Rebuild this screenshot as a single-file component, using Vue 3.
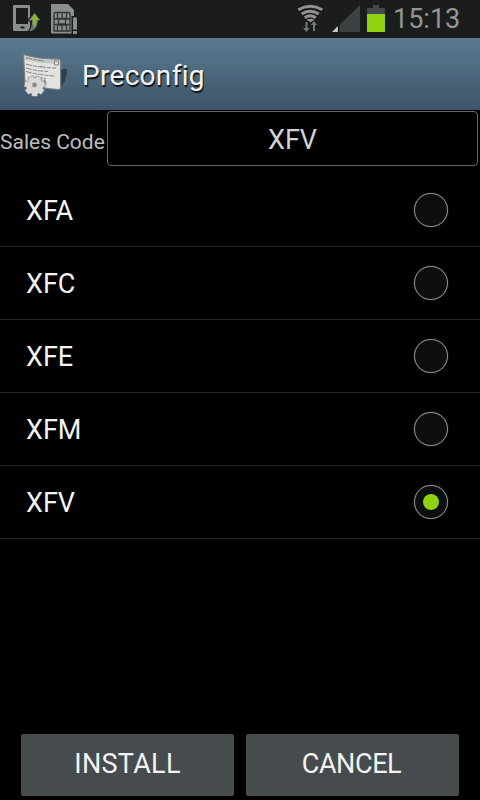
<template>
  <div class="screen">
    <div class="status-bar">
      <svg class="status-left" width="90" height="38" viewBox="0 0 90 38">
        <!-- Phone with update arrow -->
        <path d="M14 5h15q1 0 1 1v24q0 1-1 1H14q-1 0-1-1V6q0-1 1-1z" fill="#8a8e8e" />
        <path d="M16 8h12v16H16z" fill="#1b1c1c" />
        <path d="M20.500 26.500h4v2h-4z" fill="#1b1c1c" />
        <path d="M34.600 12l7 9h-3.200q0 6-4 9-2.500 2-6.500 2 3.500-4 3.500-11h-4z" fill="#6b7473" stroke="#1b1c1c" stroke-width="1.200" />
        <path d="M34.600 14l4.600 6h-2.400q0 4-2.300 7.500-1.500-2-1.500-7.500h-2.800z" fill="#8bb82a" />
        <!-- Sim card -->
        <path d="M51 4h17l6 6v23.500H51z" fill="#8a8e8e" />
        <path d="M71.500 16h6v18.500h-6z" fill="#1b1c1c" />
        <path d="M73 17.500h4v12h-4zM73 31h4v3h-4z" fill="#8a8e8e" />
        <g fill="none" stroke="#303536" stroke-width="1.300">
          <path d="M54 31V14q0-1.500 1.500-1.500h13q1.500 0 1.500 1.500v17z" />
          <path d="M57.500 13v5.500h9V13M57.500 31v-6h9v6M62 13v5M62 25v5.500M58.500 19h7v5h-7z" />
          <path d="M54 19h4M54 24.500h4M66 19h4M66 24.500h4" />
        </g>
      </svg>
      <svg class="status-right" width="96" height="38" viewBox="292 0 96 38">
        <!-- Wifi -->
        <g fill="none" stroke="#8f9393" stroke-width="3">
          <path d="M298.300 9.700q12-7 24 0" />
          <path d="M301.700 14q8.500-5.500 17 0" />
          <path d="M304.700 17.800q5.500-4 11 0" />
        </g>
        <path d="M306.500 19.800q4-2 8 0l-4 2.500z" fill="#8f9393" />
        <path d="M305.500 22h2v6h2l-3 4-3.500-4h2.500zM313 31v-6h-2.200l3.200-4 3 4h-2v6z" fill="#6f7777" />
        <!-- Signal -->
        <path d="M360 5v27h-28z" fill="#3c4142" />
        <path d="M338 26v6h-6z" fill="#c4c7c7" />
        <path d="M338 25h1.300v7H338z" fill="#000" />
        <!-- Battery -->
        <path d="M373 5h6v3h6v6h-18V8h6z" fill="#434849" />
        <path d="M367 14h18v18h-18z" fill="#8fd20f" />
      </svg>
      <span class="clock">15:13</span>
    </div>

    <header class="action-bar">
      <svg class="app-icon" width="48" height="48" viewBox="20 51 48 48">
        <!-- Sheet of paper -->
        <path d="M61 71l4-1.500q3 .5 2 4.500l-2.500 9-4.500 6z" fill="#2b3843" opacity=".85" />
        <path d="M23.500 55.500q16 5 34.500 4.500 2.600 0 2.600 2.500v26q0 2-2 2-18-1-33.600-6.500z" fill="#e2e2e0" stroke="#777c7f" stroke-width="1.200" />
        <path d="M24.500 57q15 4.500 35 4v4q-19-.5-35-4.500z" fill="#c4c6c5" />
        <path d="M54.500 62h4v4h-4z" fill="#dcdcdc" stroke="#858585" stroke-width="1" />
        <g fill="none" stroke="#858686" stroke-width="1" stroke-dasharray="6 1 4 1">
          <path d="M26 58.500q9 2.500 18 3.500M26 65q8 2.500 16 3M40 67.500q8 1.500 16 1.500M26 69q10 3 22 3.500M26 72.500q13 3.500 28 4.500M37 78.500l9 1" />
        </g>
        <path d="M43 80q4 1 3.500 5l-3 4z" fill="#6f7578" opacity=".7" />
        <!-- Gear -->
        <g stroke="#858c90" stroke-width="6.400">
          <path v-for="angle in teeth" :key="angle" d="M34.700 87V76.500" :transform="`rotate(${angle} 34.700 87)`" />
        </g>
        <circle cx="34.700" cy="87" r="9" fill="#858c90" />
        <g stroke="#d9d9d9" stroke-width="5">
          <path v-for="angle in teeth" :key="angle" d="M34.700 87V77" :transform="`rotate(${angle} 34.700 87)`" />
        </g>
        <circle cx="34.700" cy="87" r="8.300" fill="#d9d9d9" />
        <circle cx="34.500" cy="86" r="2.400" fill="#858b8e" />
      </svg>
      <h1 class="title">Preconfig</h1>
    </header>

    <div class="sales-code">
      <label class="label" for="code">Sales Code</label>
      <div id="code" class="field">{{ selected }}</div>
    </div>

    <ul class="codes">
      <li v-for="code in codes" :key="code" class="code" @click="selected = code">
        <span class="name">{{ code }}</span>
        <span class="radio" :class="{ checked: code === selected }"></span>
      </li>
    </ul>

    <div class="actions">
      <button class="install">INSTALL</button>
      <button class="cancel">CANCEL</button>
    </div>
  </div>
</template>

<script setup>
import { ref } from 'vue'

const codes = ['XFA', 'XFC', 'XFE', 'XFM', 'XFV']
const selected = ref('XFV')

// Rotation of each gear tooth in the app icon
const teeth = [-25, 26, 77, 128, 180, 231, 283]
</script>

<style>
body {
  margin: 0;
  background: #000;
}
</style>

<style scoped>
.screen {
  display: flex;
  flex-direction: column;
  width: 480px;
  height: 800px;
  overflow: hidden;
  background: #000;
  color: #f3f3f3;
  font-family: Roboto, sans-serif;
}
.status-bar {
  display: flex;
  height: 38px;
  flex: none;
  background: #1b1c1c;
}
.status-right {
  margin-left: 202px;
}
.clock {
  margin-left: 5px;
  font-size: 27px;
  line-height: 39px;
  color: #929696;
}
.action-bar {
  display: flex;
  align-items: center;
  box-sizing: border-box;
  height: 72px;
  flex: none;
  padding-left: 20px;
  background: linear-gradient(#5b7b90, #3d5369);
}
.title {
  margin: 0 0 0 14px;
  padding-top: 3px;
  font-size: 28px;
  font-weight: 400;
  line-height: 69px;
  letter-spacing: 0.3px;
  font-variant-ligatures: none;
  text-shadow: 1px 2px 1px #111;
}
.sales-code {
  display: flex;
  align-items: center;
  height: 64px;
  flex: none;
}
.label {
  width: 107px;
  font-size: 21px;
  white-space: nowrap;
  color: #bdbdbd;
}
.field {
  box-sizing: border-box;
  width: 371px;
  height: 55px;
  margin-bottom: 7px;
  border: 1px solid #5f6867;
  border-radius: 4px;
  font-size: 27px;
  line-height: 57px;
  text-align: center;
  color: #d2d2d2;
}
.codes {
  margin: 0;
  padding: 0;
  list-style: none;
}
.code {
  display: flex;
  align-items: center;
  justify-content: space-between;
  box-sizing: border-box;
  height: 73px;
  padding: 0 32px 0 26px;
  border-bottom: 1px solid #292929;
  font-size: 27px;
  cursor: pointer;
}
.name {
  padding-top: 2px;
}
.radio {
  display: flex;
  align-items: center;
  justify-content: center;
  box-sizing: border-box;
  width: 34px;
  height: 34px;
  border: 1px solid #858c8c;
  border-radius: 50%;
  background: #0c0e10;
  box-shadow: 0 0 1px #858c8c;
}
.checked::after {
  content: '';
  width: 16px;
  height: 16px;
  border-radius: 50%;
  background: #8fd20f;
}
.actions {
  display: flex;
  gap: 12px;
  margin-top: auto;
  padding: 0 21px 4px;
}
button {
  width: 213px;
  height: 62px;
  padding: 0 0 2px;
  border: none;
  border-radius: 2px;
  background: #464b4e;
  color: #f3f3f3;
  font-family: inherit;
  font-size: 27px;
}
.install {
  letter-spacing: 0.3px;
}
.cancel {
  padding-right: 2px;
  letter-spacing: -0.4px;
}
</style>
